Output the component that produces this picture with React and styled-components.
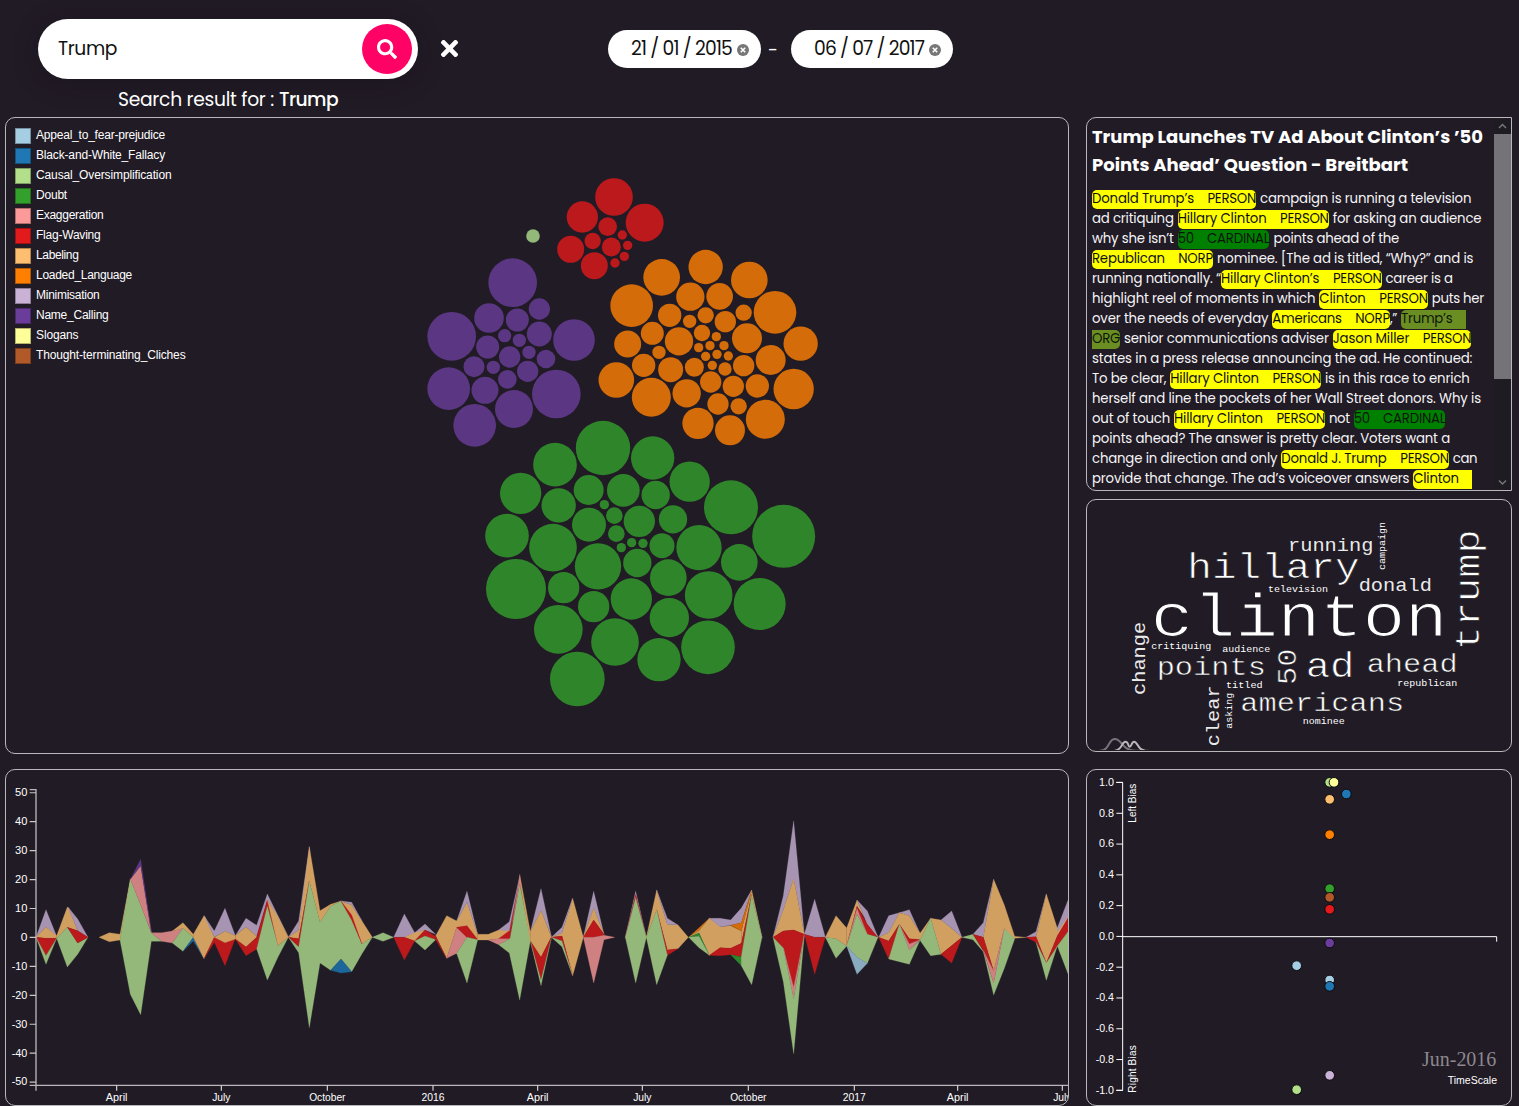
import React, { useLayoutEffect, useRef, useState } from "react";
import styled, { createGlobalStyle } from "styled-components";
import { FaSearch, FaTimes } from "react-icons/fa";

const sans = `Poppins, Inter, "Open Sans", sans-serif`;
const arial = `"Liberation Sans", Arial, sans-serif`;

const Global = createGlobalStyle`
  * { box-sizing: border-box; }
  body { margin: 0; background: #211b25; color: #fff; font-family: ${sans}; overflow: hidden; }
`;

const Page = styled.div`
  width: 1519px;
  height: 1106px;
  display: flex;
  flex-direction: column;
  background: #211b25;
  overflow: hidden;
`;
const Header = styled.header`
  height: 117px;
  display: flex;
  padding: 19px 0 0 38px;
`;
const SearchArea = styled.div`
  width: 380px;
  display: flex;
  flex-direction: column;
  align-items: center;
`;
const SearchBox = styled.div`
  width: 380px;
  height: 60px;
  padding: 0 6px 0 20px;
  border-radius: 30px;
  background: #fff;
  color: #111;
  display: flex;
  align-items: center;
  justify-content: space-between;
  font-size: 18.7px;
  box-shadow: 0 4px 24px rgba(20, 16, 28, 0.4);
`;
const SearchButton = styled.button`
  width: 50px;
  height: 50px;
  border: 0;
  padding: 0;
  border-radius: 50%;
  background: #ff0266;
  color: #fff;
  display: flex;
  align-items: center;
  justify-content: center;
`;
const ResultLine = styled.div`
  display: flex;
  gap: 5px;
  margin-top: 8px;
  font-size: 18.7px;
  line-height: 26px;
`;
const ClearSearch = styled.div`
  width: 62px;
  height: 59px;
  display: flex;
  align-items: center;
  justify-content: center;
`;
const Dates = styled.div`
  display: flex;
  align-items: center;
  height: 38px;
  margin: 11px 0 0 128px;
`;
const DatePill = styled.div`
  width: ${(p) => p.$width}px;
  height: 38px;
  padding-left: 23px;
  border-radius: 19px;
  background: #fff;
  color: #111;
  display: flex;
  align-items: center;
  gap: 5px;
  font-size: 18.7px;
  svg { margin-top: 1px; }
`;
const Dash = styled.div`
  width: 30px;
  padding-right: 6px;
  text-align: center;
  font-size: 18px;
`;
const Main = styled.main`
  display: grid;
  grid-template-columns: 1064px 426px;
  column-gap: 17px;
  padding-left: 5px;
`;
const Column = styled.section`
  display: flex;
  flex-direction: column;
`;
const Panel = styled.div`
  height: ${(p) => p.$height}px;
  margin-bottom: ${(p) => p.$after || 0}px;
  border: 1px solid #b9b7bb;
  border-radius: ${(p) => p.$radius || "10px"};
  display: flex;
  overflow: hidden;
  svg { display: block; }
`;
const Legend = styled.div`
  width: 190px;
  flex: none;
  padding: 8px 0 0 9px;
  font: 12px/20px ${arial};
`;
const LegendRow = styled.div`
  height: 20px;
  display: flex;
  gap: 5px;
  line-height: 19px;
  align-items: center;
`;
const Swatch = styled.i`
  width: 16px;
  height: 16px;
  background: ${(p) => p.$color};
  border: 1px solid rgba(0, 0, 0, 0.3);
`;
const Article = styled.article`
  flex: 1;
  height: 372px;
  padding: 5px 0 0 5px;
  overflow: hidden;
  font-size: 13.3px;
`;
const Title = styled.h1`
  margin: 0 0 10px;
  font-size: 18px;
  line-height: 28px;
  font-weight: 700;
`;
const Line = styled.div`
  height: 20px;
  display: flex;
  align-items: center;
  gap: 4px;
  color: #f6f5f7;
`;
const Joined = styled.div`
  display: flex;
  align-items: center;
`;
const kinds = { y: "#ffff00", g: "#008000", o: "#6b8e23" };
const Mark = styled.mark`
  width: ${(p) => p.$width}px;
  height: 19px;
  flex: none;
  display: flex;
  align-items: center;
  justify-content: space-between;
  background: ${(p) => kinds[p.$kind]};
  color: ${(p) => (p.$kind === "y" ? "#111" : "#0b160b")};
  border-radius: ${(p) => p.$corners || "5px"};
`;
const Spacer = styled.span`
  width: ${(p) => p.$width}px;
`;
const FitBox = styled.span`
  display: block;
  flex: none;
  white-space: pre;
  width: ${(p) => p.$width}px;
  padding-bottom: ${(p) => p.$raise || 0}px;
  font-weight: ${(p) => (p.$bold ? 500 : "inherit")};
`;
const Scrollbar = styled.div`
  width: 17px;
  height: 372px;
  background: #1f1b22;
  display: flex;
  flex-direction: column;
  justify-content: space-between;
`;
const Arrow = styled.div`
  height: 16px;
  display: flex;
  align-items: center;
  justify-content: center;
`;
const Thumb = styled.div`
  height: 245px;
  margin-bottom: auto;
  background: #757378;
`;

function Fit({ w, children, bold, raise }) {
  const ref = useRef(null);
  const [spacing, setSpacing] = useState(0);
  useLayoutEffect(() => {
    const range = document.createRange();
    range.selectNodeContents(ref.current);
    const natural = range.getBoundingClientRect().width;
    setSpacing((w - natural) / Math.max(1, children.length));
  }, []);
  return (
    <FitBox ref={ref} $width={w} $bold={bold} $raise={raise} style={{ letterSpacing: spacing }}>
      {children}
    </FitBox>
  );
}

const labelWidths = { PERSON: 48.6, CARDINAL: 62.3, NORP: 34.8 };
function Entity({ name, label, w, kind = "y" }) {
  return (
    <Mark $width={w} $kind={kind}>
      <Fit w={w - labelWidths[label] - 13.5}>{name}</Fit>
      <Fit w={labelWidths[label]}>{label}</Fit>
    </Mark>
  );
}

const legend = [
  ["Appeal_to_fear-prejudice", "#a6cee3", 129], ["Black-and-White_Fallacy", "#1f78b4", 129],
  ["Causal_Oversimplification", "#b2df8a", 135.5], ["Doubt", "#33a02c", 31],
  ["Exaggeration", "#fb9a99", 67.5], ["Flag-Waving", "#e31a1c", 64.5],
  ["Labeling", "#fdbf6f", 42.5], ["Loaded_Language", "#ff7f00", 96],
  ["Minimisation", "#cab2d6", 63.5], ["Name_Calling", "#6a3d9a", 72.5],
  ["Slogans", "#ffff99", 42.5], ["Thought-terminating_Cliches", "#b15928", 149.5],
];

const upperBubbles = {
  "#94b87a": [[369, 198, 20.5]],
  "#bb191c": [[612, 81, 56.5], [517, 141, 47], [704, 158, 57], [593, 170, 28], [637, 195, 14], [548, 213, 24.5], [604, 231, 28.5], [653, 226, 14], [643, 259, 14], [615, 279, 14], [482, 238, 40.5], [553, 287, 40.5]],
  "#5b3683": [[308, 338, 73], [388, 417, 32], [237, 444, 44.5], [322, 450, 34.5], [125, 499, 73], [284, 497, 20], [328, 511, 20], [388, 492, 37.5], [492, 510, 62.5], [233, 531, 34.5], [299, 561, 32], [357, 547, 20], [408, 567, 28], [192, 590, 31.5], [250, 592, 20], [353, 604, 32], [116, 656, 64], [225, 661, 40.5], [292, 628, 28], [439, 672, 73], [312, 717, 57], [194, 766, 64]],
  "#d36c09": [[755, 322, 55], [887, 291, 51.5], [1018, 330, 55], [665, 407, 64], [841, 380, 42.5], [929, 379, 40], [1095, 427, 64], [1001, 428, 24.5], [779, 436, 35], [887, 436, 24.5], [839, 454, 20], [946, 455, 32], [727, 490, 34.5], [653, 522, 40.5], [807, 514, 42.5], [876, 489, 24.5], [919, 500, 14], [866, 533, 14], [900, 527, 14], [942, 527, 14], [1011, 505, 45], [1172, 521, 51.5], [747, 547, 20], [887, 559, 14], [921, 553, 14], [955, 558, 14], [1082, 570, 45], [701, 586, 35], [782, 599, 37.5], [853, 592, 28.5], [907, 586, 14], [945, 597, 20], [1001, 587, 32], [619, 630, 53.5], [902, 636, 32], [970, 649, 32], [1042, 648, 35], [1151, 657, 60.5], [724, 682, 58.5], [830, 670, 42.5], [924, 702, 32], [986, 709, 24.5], [864, 760, 47], [960, 781, 45], [1066, 748, 58.5]],
};
const lowerBubbles = [[399, 114, 81.5], [548, 144, 65], [255, 164, 65.5], [659, 215, 60.5], [152, 250, 62], [356, 240, 45], [460, 241, 49], [557, 255, 42.5], [783, 292, 81], [403, 284, 14], [266, 286, 51.5], [433, 317, 25], [357, 344, 51], [508, 334, 47], [609, 328, 42.5], [941, 379, 94.5], [111, 377, 65.5], [439, 371, 25], [249, 413, 71.5], [454, 413, 14], [485, 398, 14], [519, 400, 14], [576, 407, 37.5], [687, 413, 68], [808, 457, 55], [384, 469, 69.5], [502, 459, 42.5], [595, 503, 55], [138, 537, 90], [281, 533, 47], [716, 555, 71.5], [869, 582, 78], [484, 567, 62], [371, 590, 47], [598, 623, 59], [265, 658, 73], [435, 696, 71.5], [567, 749, 65], [714, 712, 80.5], [322, 807, 82]];

const C = { M: "#a793b2", T: "#d1a061", R: "#bb191c", G: "#94b87a", P: "#cf8081", B: "#1d6699", V: "#5b3683", L: "#8aaac0", D: "#2d862a", O: "#d36c09" };
const streams = [
  [0, [
    "M108,517 138,434 170,514 138,486", "T108,517 138,486 170,512 170,520 138,520", "R108,517 138,520 170,520 138,572", "G108,517 138,572 170,520 138,598",
    "T170,512 202,426 206,430 233,497 202,487 170,520", "M204,426 233,462 264,517 233,497", "G170,520 202,487 233,534 264,517 233,568 202,606", "R202,487 233,497 264,517 233,534",
    "T297,517 328,503 360,508 360,525 328,530", "T360,508 391,343 391,353 360,526", "G360,525 391,343 422,420 454,503 485,529 454,529 422,749 391,688", "P391,343 422,302 454,502 422,420", "V391,343 422,283 454,502 422,302",
    "P454,503 485,503 517,498 549,490 517,534 485,529", "T517,498 549,473 580,508 580,517 549,490", "G517,534 549,490 580,517 549,559", "B549,559 580,517 612,581 580,528",
    "T580,508 612,452 615,455 643,517 612,581 580,517", "M612,452 643,498 675,430 706,512 675,499 643,516", "R612,581 643,517 675,533 706,520 675,602 643,532", "T643,517 675,499 706,512 706,522 675,533",
    "M706,512 738,460 770,481 802,387 834,452 865,515 834,460 802,405 770,514 738,486", "T706,512 738,486 770,514 770,517 738,546 706,522", "R706,522 738,546 770,517 802,405 834,540 802,424 770,552 738,572", "G770,552 802,424 834,542 865,517 834,576 802,645", "T802,405 834,456 865,517 834,542",
    "M865,517 896,468 928,245 930,265 896,496", "T865,517 896,496 928,245 960,437 992,418 1023,408 1055,420 1086,468 1117,517 1086,537 1055,465 1023,408 992,424 960,472 928,348 896,521", "R865,517 896,521 928,348 896,546",
    "G865,517 896,546 928,348 960,472 992,424 1023,408 1055,465 1086,537 1117,517 1086,566 1055,620 1023,582 992,616 960,594 928,788 896,563", "B992,616 1023,582 1055,620 1023,624", "M1023,408 1055,412 1086,468 1055,420", "R1023,408 1055,450 1086,537 1055,465",
  ]],
  [1050, [
    "G67,517 99,503 131,517 99,529", "M131,517 163,447 194,503 225,477 257,508 225,495 194,506 163,517", "T163,517 194,503 225,495 194,528", "R131,517 163,517 194,528 163,585", "R194,528 225,495 257,514 257,524 225,513", "G194,528 225,513 257,524 225,555",
    "T257,512 290,452 320,468 351,411 383,508 383,524 351,484 320,487 290,580", "R257,514 290,580 257,524", "P290,580 320,487 351,517 320,565", "R320,487 351,482 383,524 351,517", "G320,565 351,517 383,524 351,654", "M320,468 351,379 383,508 351,411",
    "T383,508 415,508 446,495 478,493 478,503 446,521 415,525 383,525", "R446,521 478,497 509,340 480,521", "P415,525 446,521 480,521 446,539", "M446,495 478,470 509,335 478,497", "G446,539 480,521 509,357 541,520 541,528 509,705 478,564", "T509,328 541,500 541,528 509,350", "P488,470 509,332 514,372 509,357",
    "M541,500 573,371 604,514 573,437", "T541,500 573,437 604,515 573,577 541,528", "R541,528 573,577 604,517 573,645", "G541,528 573,645 604,520 573,662",
    "T604,517 636,503 668,400 700,517 668,632 636,513", "M604,517 636,487 668,400 636,503", "R604,517 636,513 668,632 636,528", "G604,517 636,528 668,632 636,545",
    "M700,517 731,379 762,508 731,430", "T700,517 731,430 762,508 731,465", "R700,517 731,465 762,508 762,511 731,517", "P700,517 731,517 762,511 794,517 762,524 731,654",
    "M826,517 857,379 889,517 857,390", "R826,517 857,388 889,517 857,400", "G826,517 857,398 889,517 857,654",
    "T889,517 920,375 952,478 984,480 1015,517 984,551 952,555 920,434", "M920,375 952,460 984,480 952,478", "R920,434 952,555 984,551 952,571", "G889,517 920,434 952,571 920,659",
    "O1016,517 1078,460 1047,497", "T1016,517 1047,497 1078,460 1110,485 1110,548 1078,571 1047,504", "D1016,517 1047,504 1078,571 1047,514", "G1016,517 1047,514 1078,571 1047,548",
  ]],
  [2100, [
    "T28,460 60,485 92,482 124,498 124,535 92,550 60,548 28,571", "M28,460 60,460 92,465 124,429 155,375 124,473 92,481 60,485", "T124,498 155,375 186,517 155,392 124,535", "O92,481 124,473 155,378 124,498", "R28,571 60,548 92,550 124,535 155,388 124,576 92,569 60,572", "D92,569 124,576 155,392 124,602", "G124,602 124,576 155,392 186,517 155,659",
    "M219,517 250,392 281,168 313,508 281,341 250,435", "T219,517 250,435 281,341 313,508 281,495 250,498", "R219,517 250,498 281,495 313,508 281,667 250,549", "P250,549 281,667 313,508 281,702", "G219,517 250,549 281,702 313,510 281,866 250,650",
    "M313,508 344,403 376,517 344,517", "R313,508 344,517 376,517 344,628",
    "T376,517 408,452 440,489 440,543 408,521", "G376,517 408,521 440,543 408,580", "T440,489 471,405 502,476 534,515 471,424 440,543", "R440,543 471,424 502,478 534,517 502,508 471,430", "P440,543 471,430 502,508 471,448", "G440,543 471,448 502,508 534,517 502,595 471,577", "L440,543 471,577 502,595 471,628", "M471,405 502,438 534,517 502,476",
    "M536,517 566,452 598,443 628,434 660,505 628,452 598,443 566,503", "T536,517 566,503 598,443 628,452 660,505 660,524 628,521 598,478 566,528", "R536,517 566,528 598,478 566,582", "R598,478 628,521 660,524 628,537", "P598,478 628,537 660,524 628,555", "G566,582 598,478 628,555 660,526 628,598 598,590",
    "T660,505 692,460 723,465 755,490 786,517 723,568 692,460 660,526", "G660,526 692,460 723,568 692,572", "M723,465 755,438 786,517 755,490", "R723,568 786,517 755,594",
    "G786,517 819,508 850,558 881,655 913,490 944,516 944,522 913,610 881,690 850,560 819,524", "M819,508 850,473 881,343 850,517", "T850,517 881,343 913,420 944,514 978,517 944,520 913,490 881,618", "R819,508 850,517 881,618 850,556", "P850,556 881,618 913,490 881,655",
    "M978,517 1008,500 1039,387 1008,515", "T1008,515 1039,387 1072,490 1104,453 1104,460 1072,513 1039,594", "R978,517 1008,515 1039,594 1072,513 1104,460 1104,500 1072,543 1039,594 1008,532", "G1008,532 1039,594 1072,543 1039,646", "G1072,543 1104,500 1104,626", "M1072,488 1104,406 1104,455 1072,500",
  ]],
];

const words = [
  ["running", 624, 167, 61], ["hillary", 322, 250, 123], ["television", 564, 290, 30], ["donald", 836, 288, 61],
  ["clinton", 212, 423, 212], ["critiquing", 214, 462, 30], ["audience", 427, 470, 30], ["points", 230, 539, 91],
  ["ad", 677, 545, 122], ["ahead", 860, 531, 91], ["republican", 952, 573, 30], ["titled", 438, 578, 30.5],
  ["americans", 481, 647, 91], ["nominee", 668, 686, 30], ["campaign", 916, 225, 30, true], ["trump", 1198, 466, 121, true],
  ["change", 196, 600, 61, true], ["50", 647, 570, 91, true], ["clear", 416, 754, 61, true], ["asking", 456, 701, 30, true],
];

const dots = [
  [749, 52, "#b2df8a"], [762, 52, "#ffff99"], [799, 87, "#1f78b4"], [749, 103, "#fdbf6f"], [749, 209, "#ff7f00"], [749, 371, "#33a02c"],
  [749, 397, "#b15928"], [749, 433, "#e31a1c"], [749, 534, "#6a3d9a"], [650, 602, "#a6cee3"], [749, 645, "#a6cee3"], [749, 664, "#1f78b4"],
  [749, 931, "#cab2d6"], [650, 974, "#b2df8a"],
];

const Circles = ({ items, color }) => items.map(([x, y, r], i) => <circle key={i} cx={x} cy={y} r={r} fill={color} />);

function Bubbles() {
  return (
    <svg width="872" height="635" viewBox="196 118 872 635">
      <g transform="translate(410 170) scale(.33333)">
        {Object.entries(upperBubbles).map(([color, items]) => <Circles key={color} items={items} color={color} />)}
      </g>
      <g transform="translate(470 410) scale(.33333)"><Circles items={lowerBubbles} color="#2f862a" /></g>
    </svg>
  );
}

const months = [[350, "April"], [664, "July"], [982, "October"], [1299, "2016"], [1613, "April"], [1927, "July"], [2245, "October"], [2563, "2017"], [2873, "April"], [3187, "July"]];

function StreamChart() {
  return (
    <svg width="1062" height="335" viewBox="18 15 3186 1005" fontFamily={arial} fontSize="30" fill="#fff">
      {streams.map(([x, shapes]) => (
        <g key={x} transform={`translate(${x})`}>
          {shapes.map((s, i) => <polygon key={i} points={s.slice(1)} fill={C[s[0]]} stroke={C[s[0]]} strokeWidth="0.8" />)}
        </g>
      ))}
      <path d="M89,74H108V961H89M108,961V977M108,961H3204" fill="none" stroke="#b9b7bb" strokeWidth="4" />
      {[50, 40, 30, 20, 10, 0, -10, -20, -30, -40, -50].map((v) => {
        const y = 517.3 - v * 8.68;
        return (
          <g key={v}>
            <path d={`M89,${y}H108`} stroke="#c9c7ca" strokeWidth="3.5" />
            <text x="82" y={y + 10} textAnchor="end" textLength={v ? (v < 0 ? 47 : 37) : 20} lengthAdjust="spacingAndGlyphs">{v}</text>
          </g>
        );
      })}
      {months.map(([x, t]) => (
        <g key={x}>
          <path d={`M${x},961V977`} stroke="#d6d5d7" strokeWidth="3.5" />
          <text x={x} y="1008" textAnchor="middle" textLength={{ April: 65, July: 55, October: 109 }[t] || 69} lengthAdjust="spacingAndGlyphs">{t}</text>
        </g>
      ))}
    </svg>
  );
}

function WordCloud() {
  return (
    <svg width="424" height="250" viewBox="21 15 1272 750" fontFamily={`"Courier New", "Liberation Mono", monospace`} fill="#fff">
      {words.map(([t, x, y, size, up]) => (
        <text
          key={t}
          fontSize={size}
          textLength={t.length * size * 0.6}
          fillOpacity={size === 61 ? 0.92 : 1}
          stroke={size > 61 ? "#211b25" : "none"}
          strokeWidth={size * 0.02}
          transform={`translate(${x} ${y})${up ? " rotate(-90)" : ""} scale(1 ${t === "50" ? 0.94 : 0.86})`}
        >
          {t}
        </text>
      ))}
      <g fill="none" strokeWidth="6" strokeLinecap="round">
        <path d="M60,767C90,766 84,732 105,732S125,766 165,767H205" stroke="#77737a" />
        <path d="M105,767C127,765 125,740 136,740S143,755 149,755S154,740 163,740S174,765 192,766" stroke="#bbb8bd" />
      </g>
    </svg>
  );
}

function BiasChart() {
  return (
    <svg width="424" height="335" viewBox="21 15 1272 1005" fontFamily={arial} fontSize="30" fill="#fff">
      <path d="M109,52H128V976H109M128,515H1250V530" fill="none" stroke="#fff" strokeWidth="3" />
      {Array.from({ length: 11 }, (_, i) => {
        const y = 52.5 + i * 92.35;
        return (
          <g key={i}>
            <path d={`M109,${y}H128`} stroke="#fff" strokeWidth="3" />
            <text x="102" y={y + 10} textAnchor="end" textLength={i > 5 ? 55 : 45} lengthAdjust="spacingAndGlyphs">{(1 - i * 0.2).toFixed(1).replace("-0.0", "0.0")}</text>
          </g>
        );
      })}
      <text transform="translate(168 173) rotate(-90)" textLength="117">Left Bias</text>
      <text transform="translate(168 983) rotate(-90)" textLength="142">Right Bias</text>
      <text x="1026" y="904" fontFamily={`"Liberation Serif", "Times New Roman", serif`} fontSize="60" fill="#8c888e" textLength="223">Jun-2016</text>
      <text x="1103" y="957" textLength="148" lengthAdjust="spacingAndGlyphs">TimeScale</text>
      {dots.map(([x, y, c], i) => <circle key={i} cx={x} cy={y} r="14.5" fill={c} stroke="#0c090e" strokeWidth="3" />)}
    </svg>
  );
}

const ClearIcon = () => (
  <svg width="12" height="12" viewBox="0 0 12 12">
    <circle cx="6" cy="6" r="6" fill="#777" />
    <path d="M3.8 3.8L8.2 8.2M8.2 3.8L3.8 8.2" stroke="#fff" strokeWidth="1.6" />
  </svg>
);
const Chevron = ({ down }) => (
  <svg width="9" height="7" viewBox="0 0 9 7"><path d={down ? "M1 1.5L4.5 5L8 1.5" : "M1 5L4.5 1.5L8 5"} fill="none" stroke="#77747a" strokeWidth="1.5" /></svg>
);

export default function App() {
  return (
    <Page>
      <Global />
      <Header>
        <SearchArea>
          <SearchBox>
            <Fit w={59} raise={2}>Trump</Fit>
            <SearchButton aria-label="Search"><FaSearch size={20} /></SearchButton>
          </SearchBox>
          <ResultLine><Fit w={156}>Search result for :</Fit><Fit w={59} bold>Trump</Fit></ResultLine>
        </SearchArea>
        <ClearSearch><FaTimes size={25} /></ClearSearch>
        <Dates>
          <DatePill $width={153}><Fit w={101} raise={2}>21 / 01 / 2015</Fit><ClearIcon /></DatePill>
          <Dash>-</Dash>
          <DatePill $width={162}><Fit w={110} raise={2}>06 / 07 / 2017</Fit><ClearIcon /></DatePill>
        </Dates>
      </Header>
      <Main>
        <Column>
          <Panel $height={637} $after={15}>
            <Legend>
              {legend.map(([name, color, w]) => (
                <LegendRow key={name}><Swatch $color={color} /><Fit w={w} raise={1}>{name}</Fit></LegendRow>
              ))}
            </Legend>
            <Bubbles />
          </Panel>
          <Panel $height={337}><StreamChart /></Panel>
        </Column>
        <Column>
          <Panel $height={374} $after={8} $radius="10px 0 0 10px">
            <Article>
              <Title>
                <Fit w={391}>Trump Launches TV Ad About Clinton’s ’50</Fit>
                <Fit w={316}>Points Ahead’ Question - Breitbart</Fit>
              </Title>
              <Line><Entity name="Donald Trump’s" label="PERSON" w={164} /><Fit w={211.3}>campaign is running a television</Fit></Line>
              <Line><Fit w={81.7}>ad critiquing</Fit><Entity name="Hillary Clinton" label="PERSON" w={151} /><Fit w={148.7}>for asking an audience</Fit></Line>
              <Line><Fit w={81.7}>why she isn’t</Fit><Entity name="50" label="CARDINAL" kind="g" w={91.7} /><Fit w={125.7}>points ahead of the</Fit></Line>
              <Line><Entity name="Republican" label="NORP" w={121} /><Fit w={256.3}>nominee. [The ad is titled, “Why?” and is</Fit></Line>
              <Line><Joined><Fit w={129}>running nationally. “</Fit><Entity name="Hillary Clinton’s" label="PERSON" w={160.5} /></Joined><Fit w={67.3}>career is a</Fit></Line>
              <Line><Fit w={223.3}>highlight reel of moments in which</Fit><Entity name="Clinton" label="PERSON" w={108.5} /><Fit w={52}>puts her</Fit></Line>
              <Line><Fit w={176.3}>over the needs of everyday</Fit><Joined><Entity name="Americans" label="NORP" w={117.7} /><Fit w={7}>,”</Fit></Joined><Mark $width={65} $kind="o" $corners="5px 0 0 5px"><Fit w={51.5}>Trump’s</Fit></Mark></Line>
              <Line><Mark $width={28} $kind="o" $corners="0 5px 5px 0"><Fit w={28}>ORG</Fit></Mark><Fit w={204.7}>senior communications adviser</Fit><Entity name="Jason Miller" label="PERSON" w={138.7} /></Line>
              <Line><Fit w={380.3}>states in a press release announcing the ad. He continued:</Fit></Line>
              <Line><Fit w={74.3}>To be clear,</Fit><Entity name="Hillary Clinton" label="PERSON" w={150.7} /><Fit w={144.7}>is in this race to enrich</Fit></Line>
              <Line><Fit w={389}>herself and line the pockets of her Wall Street donors. Why is</Fit></Line>
              <Line><Fit w={78}>out of touch</Fit><Entity name="Hillary Clinton" label="PERSON" w={151} /><Fit w={20.7}>not</Fit><Entity name="50" label="CARDINAL" kind="g" w={91.7} /></Line>
              <Line><Fit w={358}>points ahead? The answer is pretty clear. Voters want a</Fit></Line>
              <Line><Fit w={185.3}>change in direction and only</Fit><Entity name="Donald J. Trump" label="PERSON" w={167.5} /><Fit w={24.3}>can</Fit></Line>
              <Line><Fit w={317.3}>provide that change. The ad’s voiceover answers</Fit><Mark $width={58.7} $kind="y" $corners="5px 0 0 5px"><Fit w={45.5}>Clinton</Fit></Mark></Line>
              <Line><Mark $width={46} $kind="y" $corners="0 5px 5px 0" /><Spacer $width={198} /><Mark $width={91} $kind="g" /></Line>
            </Article>
            <Scrollbar>
              <Arrow><Chevron /></Arrow>
              <Thumb />
              <Arrow><Chevron down /></Arrow>
            </Scrollbar>
          </Panel>
          <Panel $height={253} $after={17}><WordCloud /></Panel>
          <Panel $height={337}><BiasChart /></Panel>
        </Column>
      </Main>
    </Page>
  );
}
